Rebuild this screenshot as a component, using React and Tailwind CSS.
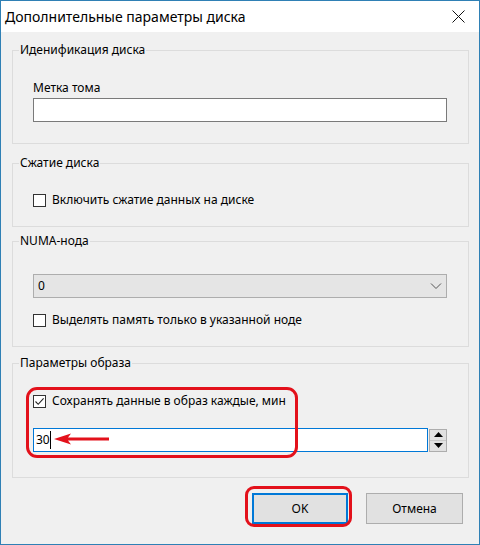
import React from "react";

const font = { fontFamily: '"Noto Sans", "Open Sans", sans-serif' };

function Box({ checked }) {
  return (
    <span className="w-[13px] h-[13px] border border-[#333333] bg-white flex items-center justify-center shrink-0">
      {checked && (
        <svg width="11" height="11" viewBox="0 0 11 11">
          <path d="M1.5 5.5 L4.2 8.3 L9.6 2.4" fill="none" stroke="#222" strokeWidth="1.1" />
        </svg>
      )}
    </span>
  );
}

function Check({ checked, label }) {
  return (
    <div className="flex items-center h-4 gap-[6px] text-[12px] leading-4 text-black">
      <Box checked={checked} />
      <span>{label}</span>
    </div>
  );
}

function Group({ title, className, children }) {
  return (
    <fieldset className={"border border-[#dcdcdc] ml-[11px] w-[457px] " + className}>
      <legend className="ml-[6px] px-[1px] text-[12px] leading-4 text-black">{title}</legend>
      <div className="px-[20px]">{children}</div>
    </fieldset>
  );
}

export default function App() {
  return (
    <div style={font} className="w-[480px] h-[545px] border border-[#2f80b5] bg-[#f0f0f0] flex flex-col relative overflow-hidden">
      <div className="h-[31px] bg-white flex items-center justify-between shrink-0">
        <span className="ml-[4px] text-[14px] text-black leading-5">Дополнительные параметры диска</span>
        <svg width="13" height="13" viewBox="0 0 13 13" className="mr-[14px]">
          <path d="M0.5 0.5 L12.5 12.5 M12.5 0.5 L0.5 12.5" stroke="#111" strokeWidth="1" />
        </svg>
      </div>

      <Group title="Иденификация диска" className="mt-[10px] pt-[22px] pb-[21px]">
        <div className="text-[12px] leading-4 text-black">Метка тома</div>
        <div className="mt-[2px] w-[414px] h-[24px] border border-[#7a7a7a] bg-white" />
      </Group>

      <Group title="Сжатие диска" className="mt-[11px] pt-[21px] pb-[18px]">
        <Check label="Включить сжатие данных на диске" />
      </Group>

      <Group title="NUMA-нода" className="mt-[6px] pt-[25px] pb-[18px]">
        <div className="w-[414px] h-[24px] border border-[#adadad] bg-[#e5e5e5] flex items-center justify-between pl-[4px] pr-[4px] text-[12px] text-black">
          <span>0</span>
          <svg width="12" height="8" viewBox="0 0 12 8">
            <path d="M1 1.5 L6 6.5 L11 1.5" fill="none" stroke="#555" strokeWidth="1" />
          </svg>
        </div>
        <div className="mt-[14px]">
          <Check label="Выделять память только в указанной ноде" />
        </div>
      </Group>

      <Group title="Параметры образа" className="mt-[8px] pt-[22px] pb-[25px]">
        <Check checked label="Сохранять данные в образ каждые, мин" />
        <div className="mt-[19px] flex items-center gap-[1px]">
          <div className="w-[395px] h-[24px] border border-[#0078d7] bg-white flex items-center pl-[2px] text-[12px] text-black">
            <span>30</span>
            <span className="w-px h-[18px] bg-black" />
          </div>
          <div className="w-[18px] h-[23px] border border-[#adadad] bg-[#e1e1e1] flex flex-col">
            <div className="flex-1 flex items-center justify-center border-b border-[#c8c8c8]">
              <svg width="9" height="5" viewBox="0 0 9 5"><path d="M0 5 L4.5 0 L9 5 Z" fill="#000" /></svg>
            </div>
            <div className="flex-1 flex items-center justify-center">
              <svg width="9" height="5" viewBox="0 0 9 5"><path d="M0 0 L4.5 5 L9 0 Z" fill="#000" /></svg>
            </div>
          </div>
        </div>
      </Group>

      <div className="mt-[15px] flex justify-end gap-[18px] pr-[16px]">
        <button className="w-[96px] h-[31px] border-2 border-[#0078d7] bg-[#e1e1e1] text-[12px] text-black">OK</button>
        <button className="w-[97px] h-[31px] border border-[#adadad] bg-[#e1e1e1] text-[12px] text-black">Отмена</button>
      </div>

      {/* annotations */}
      <div className="absolute left-[25px] top-[386px] w-[272px] h-[71px] border-[3px] border-[#e3111b] rounded-[11px]" />
      <div className="absolute left-[244px] top-[485px] w-[107px] h-[41px] border-[3px] border-[#e3111b] rounded-[9px]" />
      <svg className="absolute left-[50px] top-[430px]" width="60" height="16" viewBox="0 0 60 16">
        <path d="M3 8 L20 2.5 L17 6.6 L58 6.6 L58 9.4 L17 9.4 L20 13.5 Z" fill="#e3111b" />
      </svg>
    </div>
  );
}
